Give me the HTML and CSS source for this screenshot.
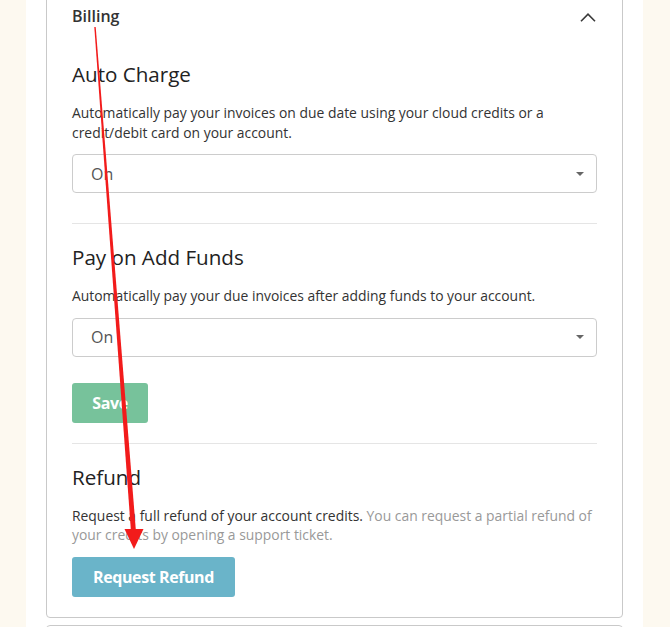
FILE: index.html
```html
<!DOCTYPE html>
<html>
<head>
<meta charset="utf-8">
<link rel="stylesheet" href="styles.css">
</head>
<body>
<div class="page">
  <div class="card">
    <div class="card-header">
      <span class="card-title">Billing</span>
      <svg class="chevron" width="16" height="9" viewBox="0 0 16 9"><path d="M1 8.2 L8 1.2 L15 8.2" fill="none" stroke="#3a3a3a" stroke-width="1.6"/></svg>
    </div>
    <div class="card-body">
      <section class="section">
        <h3>Auto Charge</h3>
        <p>Automatically pay your invoices on due date using your cloud credits or a credit/debit card on your account.</p>
        <div class="select"><span>On</span><span class="caret"></span></div>
      </section>
      <hr>
      <section class="section">
        <h3>Pay on Add Funds</h3>
        <p>Automatically pay your due invoices after adding funds to your account.</p>
        <div class="select"><span>On</span><span class="caret"></span></div>
        <button class="btn btn-save">Save</button>
      </section>
      <hr>
      <section class="section">
        <h3>Refund</h3>
        <p>Request a full refund of your account credits. <span class="muted">You can request a partial refund of your credits by opening a support ticket.</span></p>
        <button class="btn btn-refund">Request Refund</button>
      </section>
    </div>
  </div>
  <div class="card card-next"></div>
</div>
<svg class="annotation" width="670" height="627" viewBox="0 0 670 627">
  <polygon points="94.3,27 95.7,27 136,532 131,532" fill="#f21b1b"/>
  <polygon points="124.5,529 143.5,529 134,549" fill="#f21b1b"/>
</svg>
</body>
</html>
```
FILE: styles.css
```css
html, body {
  margin: 0;
  padding: 0;
}
body {
  background: #fdf9f0;
  font-family: "Open Sans", "Noto Sans", sans-serif;
  color: #333;
  overflow: hidden;
  height: 627px;
}
.page {
  display: flow-root;
  margin-left: 26px;
  width: 577px;
  padding: 0 20px;
  background: #fff;
  height: 627px;
}
.card {
  border: 1px solid #c9c9c9;
  border-radius: 4px;
  margin-top: -20px;
  background: #fff;
}
.card-header {
  display: flex;
  justify-content: space-between;
  align-items: flex-start;
  padding: 23px 25px 0 25px;
}
.card-title {
  font-size: 16px;
  line-height: 24px;
  font-weight: 600;
  color: #333;
}
.chevron {
  margin-top: 9px;
  margin-right: 1px;
}
.card-body {
  padding: 35px 25px 20px 25px;
}
.section h3 {
  margin: 0 0 18px 0;
  font-size: 20.6px;
  line-height: 22px;
  font-weight: 400;
  color: #222;
}
.section p {
  margin: 0 0 12px 0;
  font-size: 13.9px;
  line-height: 19.5px;
  color: #333;
}
.muted {
  color: #999;
}
.select {
  height: 37px;
  border: 1px solid #ccc;
  border-radius: 4px;
  display: flex;
  align-items: center;
  justify-content: space-between;
  padding: 0 12px 0 18px;
  font-size: 16px;
  color: #555;
}
.caret {
  width: 0;
  height: 0;
  border-left: 4px solid transparent;
  border-right: 4px solid transparent;
  border-top: 4px solid #666;
}
hr {
  border: 0;
  border-top: 1px solid #e5e5e5;
  margin: 30px 0 22px 0;
}
.btn {
  display: block;
  border: 0;
  border-radius: 3px;
  color: #fff;
  font-family: "Open Sans", sans-serif;
  font-size: 16px;
  font-weight: 700;
  height: 40px;
  padding: 0;
  letter-spacing: -0.4px;
}
.btn-save {
  margin-top: 26px;
  width: 76px;
  background: #77c29b;
  margin-bottom: -10px;
}
.btn-refund {
  width: 163px;
  background: #6ab4c9;
}
.card-next {
  margin-top: 7px;
  height: 40px;
}
.annotation {
  position: absolute;
  left: 0;
  top: 0;
  pointer-events: none;
}
```
